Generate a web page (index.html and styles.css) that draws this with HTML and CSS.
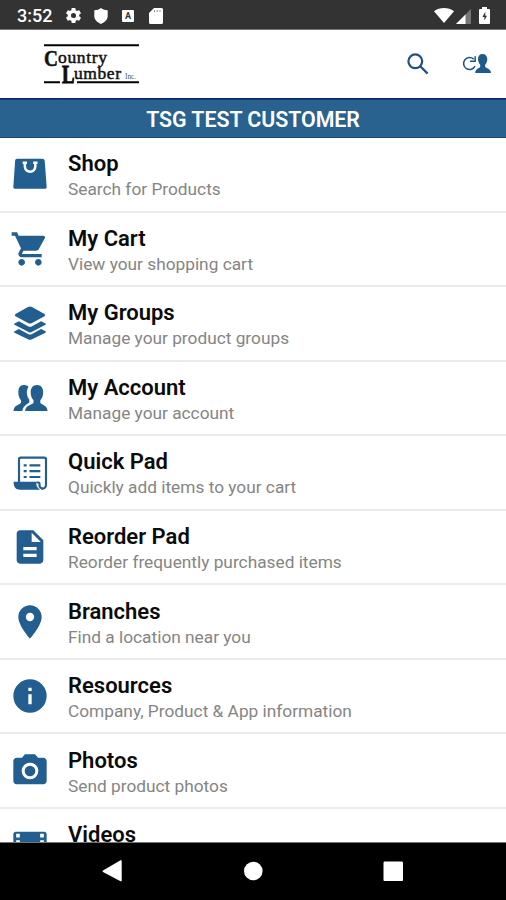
FILE: index.html
```html
<!DOCTYPE html>
<html lang="en">
<head>
<meta charset="utf-8">
<title>Country Lumber</title>
<link rel="stylesheet" href="styles.css">
</head>
<body>
<div class="status">
  <span class="clock">3:52</span>
  <svg class="s-gear" viewBox="0 0 24 24"><path d="M19.14 12.94c.04-.3.06-.61.06-.94s-.02-.64-.07-.94l2.03-1.58a.49.49 0 0 0 .12-.61l-1.92-3.32a.49.49 0 0 0-.59-.22l-2.39.96a7 7 0 0 0-1.62-.94l-.36-2.54A.48.48 0 0 0 13.92 2.400h-3.84a.48.48 0 0 0-.47.41l-.36 2.540c-.59.24-1.13.57-1.62.94l-2.39-.96a.48.48 0 0 0-.59.22L2.740 8.870a.48.48 0 0 0 .12.61l2.030 1.580c-.05.3-.09.63-.09.94s.02.64.07.94l-2.030 1.580a.49.49 0 0 0-.12.61l1.920 3.320c.12.22.37.29.59.22l2.390-.96c.5.38 1.030.7 1.620.94l.36 2.540c.05.24.24.41.48.41h3.840c.24 0 .44-.17.47-.41l.36-2.540c.59-.24 1.130-.56 1.620-.94l2.390.96c.22.08.47 0 .59-.22l1.920-3.320a.48.48 0 0 0-.12-.61zM12 15.200a3.200 3.200 0 1 1 0-6.400 3.200 3.200 0 0 1 0 6.400z"/></svg>
  <svg class="s-shield" viewBox="0 0 14 16"><path d="M7 0C5 1.500 3 2.200.3 2.300V8c0 3.600 3 6.500 6.700 8 3.700-1.500 6.700-4.400 6.700-8V2.300C11 2.200 9 1.500 7 0z"/></svg>
  <span class="s-box">A</span>
  <svg class="s-sd" viewBox="0 0 14 16"><path d="M5 0h7.500A1.500 1.500 0 0 1 14 1.500v13a1.500 1.500 0 0 1-1.500 1.500h-11A1.500 1.500 0 0 1 0 14.500V5z"/><path class="slots" d="M5.500 2v2M8.200 2v2M11 2v2"/></svg>
  <span class="grow"></span>
  <svg class="s-wifi" viewBox="0 0 20 15"><path d="M10 15L0 3.200C5.500-1 14.500-1 20 3.200z"/></svg>
  <svg class="s-cell" viewBox="0 0 15 15"><path class="dim" d="M15 0v15H0z"/><path d="M9.500 5.500V15H0z"/></svg>
  <svg class="s-batt" viewBox="0 0 11 17"><path d="M3 0h5v2h2a1 1 0 0 1 1 1v13a1 1 0 0 1-1 1H1a1 1 0 0 1-1-1V3a1 1 0 0 1 1-1h2z"/><path class="bolt" d="M6.300 4.800L3.400 9.900h2v3.600L8 8.800H6.300z"/></svg>
</div>

<header class="bar">
  <svg class="logo" viewBox="0 0 96 42">
    <path class="rule" d="M0 2.300h95M0 39.200h16M33 39.200h62"/>
    <text class="cap" x="0" y="23" textLength="14" lengthAdjust="spacingAndGlyphs">C</text>
    <text class="word" x="14" y="19.500" textLength="49" lengthAdjust="spacing">ountry</text>
    <text class="cap ell" x="18" y="40" textLength="12.500" lengthAdjust="spacingAndGlyphs">L</text>
    <text class="word" x="30" y="35.500" textLength="47" lengthAdjust="spacing">umber</text>
    <text class="inc" x="81" y="35.500" textLength="11" lengthAdjust="spacingAndGlyphs">Inc.</text>
  </svg>
  <span class="grow"></span>
  <svg class="search" viewBox="0 0 22 22"><circle cx="8.300" cy="8.300" r="6.900"/><path d="M13.300 13.300l7.300 7.300"/></svg>
  <svg class="switch" viewBox="0 0 29 22"><path class="turn" d="M11.800 6.200A6 6 0 1 0 13 13.200M13.200 3.200v5h-5.200"/><path d="M20.500 1c3 0 4.800 2 4.800 5 0 2.500-.9 4.600-2.100 5.700v2.100c.5 1.200 5.800 2 5.800 6.200H13.200c0-4.200 4.500-5 5-6.200v-2.100C17 10.600 16 8.500 16 6c0-3 1.500-5 4.500-5z"/></svg>
</header>

<h1 class="customer">TSG TEST CUSTOMER</h1>

<main class="menu">
  <a class="row"><svg viewBox="0 0 24 24"><path d="M4.300 2.800h15.200c.7 0 1.200.5 1.300 1.100L22 19.600c.1.700-.4 1.300-1.100 1.300H3.100c-.7 0-1.200-.6-1.100-1.300L3.100 3.900c0-.6.500-1.100 1.200-1.100z"/><path class="cut" d="M7.600 5.300h2.600M13.900 5.300h2.600M8.900 5.400v2c0 4.300 6.300 4.300 6.300 0v-2"/></svg><div><h2>Shop</h2><p>Search for Products</p></div></a>
  <a class="row"><svg viewBox="0 0 24 24"><path d="M7 18c-1.100 0-1.990.9-1.990 2S5.900 22 7 22s2-.9 2-2-.9-2-2-2zM1 2v2h2l3.600 7.590-1.350 2.450c-.16.28-.25.61-.25.96 0 1.100.9 2 2 2h12v-2H7.420c-.14 0-.25-.11-.25-.25l.03-.12.9-1.630h7.450c.75 0 1.410-.41 1.750-1.030l3.580-6.490A1 1 0 0 0 20 4H5.210l-.94-2zm16 16c-1.100 0-1.990.9-1.990 2s.89 2 1.990 2 2-.9 2-2-.9-2-2-2z"/></svg><div><h2>My Cart</h2><p>View your shopping cart</p></div></a>
  <a class="row"><svg viewBox="0 0 24 24"><path d="M10.800 2.400Q12 1.700 13.200 2.400L20.700 6.600Q21.600 7.300 20.700 8L13.200 12Q12 12.700 10.800 12L3.300 8Q2.400 7.300 3.300 6.600z"/><path d="M2.700 12.300l2.600-1.400 5.500 3Q12 14.600 13.200 13.900l5.500-3 2.600 1.400q.5.400 0 .8L13.200 17.300Q12 18 10.800 17.300L2.700 13.100q-.5-.4 0-.8z"/><path d="M2.700 17l2.600-1.400 5.500 3Q12 19.300 13.200 18.600l5.500-3 2.600 1.400q.5.400 0 .8L13.200 21.700Q12 22.400 10.800 21.700L2.700 17.800q-.5-.4 0-.8z"/></svg><div><h2>My Groups</h2><p>Manage your product groups</p></div></a>
  <a class="row"><svg viewBox="0 0 24 24"><path d="M8.200 4.200c1.300 0 2.200.3 2.900 1-1.500 2.300-1.200 5.600.5 7.800v1.500c-.4 1-3.700 1.500-4.200 5.300H2.100c0-3.500 3.900-3.700 4.500-4.900v-1.600C5.600 12.400 5 10.600 5 8.600c0-2.700 1-4.400 3.200-4.400z"/><path d="M16.200 4.200c2.400 0 3.700 1.700 3.700 4.300 0 2-.7 3.800-1.700 4.800v1.600c.5 1.200 4.300 1.500 4.300 4.900H9.100c0-3.400 4.500-3.700 5-4.900v-1.600c-1-1-1.700-2.800-1.700-4.800 0-2.600 1.400-4.300 3.800-4.300z"/></svg><div><h2>My Account</h2><p>Manage your account</p></div></a>
  <a class="row"><svg viewBox="0 0 24 24"><path class="line" d="M5.400 17.500V3.800q0-1 1-1h14.200q1 0 1 1V19a2.300 2.300 0 0 1-2.600 2.400"/><path d="M2.200 17.200h13.500c-.1 1.800.4 3.600 2.400 4.800H6c-2.700 0-4-1.900-3.800-4.800z"/><path class="line" d="M15.800 17.700h1.300c.4 0 .6.200.6.700v.9c0 1 .8 2.100 2 2.100"/><path class="line" d="M8.200 7.400h1.800M11.700 7.400h6.500M8.200 10.900h1.800M11.700 10.900h6.500M8.200 14.400h1.800M11.700 14.400h6.500"/></svg><div><h2>Quick Pad</h2><p>Quickly add items to your cart</p></div></a>
  <a class="row"><svg viewBox="0 0 24 24"><path d="M14 2H6c-1.100 0-1.990.9-1.990 2L4 20c0 1.100.89 2 1.990 2H18c1.100 0 2-.9 2-2V8zm2 16H8v-2h8zm0-4H8v-2h8zm-3-5V3.500L18.500 9z"/></svg><div><h2>Reorder Pad</h2><p>Reorder frequently purchased items</p></div></a>
  <a class="row"><svg viewBox="0 0 24 24"><path d="M12 2C8.130 2 5 5.130 5 9c0 5.250 7 13 7 13s7-7.750 7-13c0-3.870-3.130-7-7-7zm0 9.500a2.500 2.500 0 1 1 0-5 2.500 2.500 0 0 1 0 5z"/></svg><div><h2>Branches</h2><p>Find a location near you</p></div></a>
  <a class="row"><svg viewBox="0 0 24 24"><path d="M12 2a10 10 0 1 0 0 20 10 10 0 0 0 0-20zm1 15h-2v-6h2zm0-8h-2V7h2z"/></svg><div><h2>Resources</h2><p>Company, Product &amp; App information</p></div></a>
  <a class="row"><svg viewBox="0 0 24 24"><circle cx="12" cy="12" r="3.200"/><path d="M9 2L7.170 4H4c-1.100 0-2 .9-2 2v12c0 1.100.9 2 2 2h16c1.100 0 2-.9 2-2V6c0-1.100-.9-2-2-2h-3.170L15 2zm3 15a5 5 0 1 1 0-10 5 5 0 0 1 0 10z"/></svg><div><h2>Photos</h2><p>Send product photos</p></div></a>
  <a class="row"><svg viewBox="0 0 24 24"><path fill-rule="evenodd" d="M3.500 4h17c.8 0 1.500.7 1.500 1.500v14c0 .8-.7 1.500-1.500 1.500h-17c-.8 0-1.500-.7-1.500-1.500v-14c0-.8.700-1.500 1.500-1.500zM3.700 5.200v2.300h2.200V5.200zM18.100 5.200v2.300h2.200V5.200zM3.700 9.200v2.200h2.200V9.200zM18.100 9.200v2.200h2.200V9.200z"/></svg><div><h2>Videos</h2></div></a>
</main>

<nav class="nav">
  <svg viewBox="0 0 22 22"><path d="M1 10.400L18.500.3q1.200-.5 1.200.8v19.300q0 1.300-1.200.8L1 12.100q-1.200-.9 0-1.700z"/></svg>
  <svg viewBox="0 0 22 22"><circle cx="11.300" cy="11" r="9.300"/></svg>
  <svg viewBox="0 0 22 22"><rect x="1.500" y="1.600" width="19.500" height="19.500" rx="1.200"/></svg>
</nav>
</body>
</html>
```

FILE: styles.css
```css
* { box-sizing: border-box; }
body {
  margin: 0;
  height: 900px;
  display: flex;
  flex-direction: column;
  overflow: hidden;
  background: #fff;
  font-family: Roboto, sans-serif;
}
h1, h2, p { margin: 0; }
svg { display: block; flex: none; overflow: visible; }
.grow { flex: 1; }

.status {
  flex: none;
  height: 30px;
  padding: 2px 16px 0 17px;
  display: flex;
  align-items: center;
  background: #333;
  border-bottom: 1px solid #777;
  color: #fff;
}
.status svg { fill: #fff; }
.clock { width: 47px; font-size: 18px; font-weight: 500; line-height: 28px; padding-top: 1px; }
.status .s-gear { width: 19px; height: 19px; }
.status .s-shield { width: 14px; height: 16px; margin-left: 11px; }
.s-box {
  width: 12px;
  height: 12px;
  margin-left: 14px;
  border-radius: 1px;
  background: #fff;
  color: #333;
  font-size: 9px;
  font-weight: 700;
  line-height: 12px;
  text-align: center;
}
.status .s-sd { width: 14px; height: 16px; margin-left: 15px; }
.status .slots { stroke: #777; stroke-width: .8; }
.status .s-wifi { width: 20px; height: 15px; }
.status .s-cell { width: 15px; height: 15px; margin: 1px 0 0 2px; }
.status .dim { fill: #777; }
.status .s-batt { width: 11px; height: 17px; margin-left: 8px; }
.status .bolt { fill: #333; }

.bar {
  flex: none;
  height: 69px;
  padding: 0 15px 0 44px;
  display: flex;
  align-items: center;
  border-bottom: 1px solid #10266a;
}
.logo { width: 96px; height: 42px; margin-bottom: 1px; }
.rule { stroke: #000; stroke-width: 2; }
.logo text { font-family: "Liberation Serif", serif; fill: #111; }
.logo .word { font-size: 17.5px; stroke: #111; stroke-width: .5; }
.logo .cap { font-size: 24px; font-weight: 700; stroke: #111; stroke-width: .5; }
.logo .ell { font-size: 25px; stroke: #000; stroke-width: .9; }
.logo .inc { font-size: 8px; fill: #555; }
.search { width: 22px; height: 22px; fill: none; stroke: #1f5189; stroke-width: 2.2; margin-right: 33px; }
.switch { width: 29px; height: 22px; fill: #1e5b8d; }
.turn { fill: none; stroke: #1f5189; stroke-width: 1.5; }

.customer {
  flex: none;
  height: 39px;
  padding-top: 1px;
  background: #29618f;
  border-top: 1px solid #123c79;
  border-bottom: 1px solid #1b4677;
  color: #fff;
  font-size: 21.400px;
  font-weight: 600;
  line-height: 38px;
  letter-spacing: -.06px;
  text-align: center;
}

.menu { flex: 1; min-height: 0; overflow: hidden; }
.row {
  height: 74.550px;
  padding: 0 0 0 10px;
  display: flex;
  align-items: flex-start;
  gap: 18px;
  border-bottom: 2px solid #ebebeb;
}
.row svg { width: 40px; height: 40px; margin-top: 16.400px; fill: #235e90; }
.row div { padding-top: 12.300px; }
.row .cut { fill: none; stroke: #fff; stroke-width: 1.500; }
.row .line { fill: none; stroke: #235e90; stroke-width: 1.300; }
.row h2 { font-size: 22px; font-weight: 600; line-height: 27px; color: #0b0b0b; white-space: nowrap; }
.row p { font-size: 17.300px; line-height: 25px; color: #858585; white-space: nowrap; }

.nav {
  flex: none;
  height: 58px;
  padding: 0 102px 1px;
  display: flex;
  align-items: center;
  justify-content: space-between;
  background: #000;
  border-top: 1px solid #777;
}
.nav svg { width: 22px; height: 22px; fill: #fff; }
```
